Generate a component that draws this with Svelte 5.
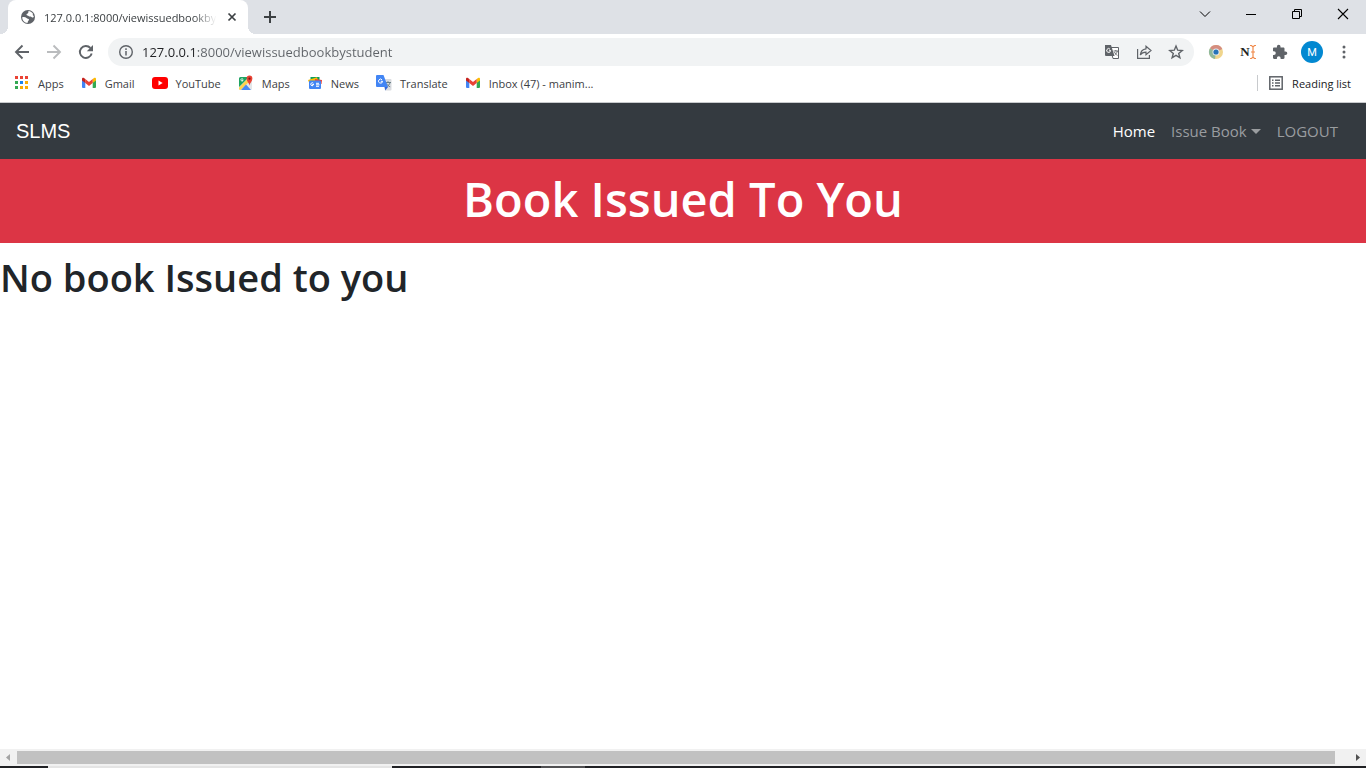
<script>
  let address = $state('127.0.0.1:8000/viewissuedbookbystudent');

  const bookmarks = [
    { icon: 'apps', label: 'Apps' },
    { icon: 'gmail', label: 'Gmail' },
    { icon: 'youtube', label: 'YouTube' },
    { icon: 'maps', label: 'Maps' },
    { icon: 'news', label: 'News' },
    { icon: 'translate', label: 'Translate' },
    { icon: 'gmail', label: 'Inbox (47) - manim...' }
  ];

  const appColors = [
    '#ea4335', '#ea4335', '#ea4335',
    '#34a853', '#1a83f2', '#fbac05',
    '#34a853', '#fbac05', '#fbac05'
  ];
</script>

{#snippet bookmarkIcon(name)}
  <svg width="16" height="16" viewBox="0 0 16 16" aria-hidden="true">
    {#if name === 'apps'}
      {#each appColors as color, i}
        <rect x={1 + (i % 3) * 5} y={1 + Math.floor(i / 3) * 5} width="3" height="3" fill={color} />
      {/each}
    {:else if name === 'gmail'}
      <path d="M1 4.500V12a1 1 0 0 0 1 1h2.300V7z" fill="#4285f4" />
      <path d="M15 4.500V12a1 1 0 0 1-1 1h-2.300V7z" fill="#34a853" />
      <path d="M11.700 4 13 3c1-.7 2 0 2 1v1.500l-3.300 2.600z" fill="#fbbc04" />
      <path d="M4.300 4 8 6.900 11.700 4v4.100L8 11 4.300 8.100z" fill="#ea4335" />
      <path d="M1 5.500V4c0-1 1-1.700 2-1l1.300 1v4.100z" fill="#c5221f" />
    {:else if name === 'youtube'}
      <rect x="0" y="2" width="16" height="12" rx="3" fill="#f00" />
      <path d="m6.500 5.500 4.200 2.500-4.200 2.500z" fill="#fff" />
    {:else if name === 'maps'}
      <rect x="1" y="2" width="13" height="13" rx="1.500" fill="#e3e6e8" />
      <path d="M2.500 2H11L1 12V3.500A1.500 1.500 0 0 1 2.500 2z" fill="#1fa463" />
      <path d="m1 12.500 10-10L13 5 2.500 15A1.500 1.500 0 0 1 1 13.500z" fill="#ffd34d" />
      <path d="M3 15 8 9.500l5 5.500z" fill="#4a89f3" />
      <path d="M5.600 5H4.200v.8h.6A1.200 1.200 0 1 1 4.900 4" stroke="#fff" stroke-width=".8" fill="none" />
      <path d="M11.500 10.500C11.300 8 8.600 6.500 8.600 3.500a2.900 2.900 0 0 1 5.800 0c0 3-2.700 4.500-2.900 7z" fill="#ea4335" />
      <circle cx="11.500" cy="3.700" r="1.100" fill="#811411" />
    {:else if name === 'news'}
      <path d="M3.500 2h9v6h-9z" fill="#0c9d58" />
      <path d="m1 5 9-2.700 1 3.200-9 2z" fill="#fbbc04" />
      <path d="m8 4 7 1-.5 4H8z" fill="#ea4335" />
      <rect x="2" y="5.500" width="12" height="8.500" rx="1" fill="#4285f4" />
      <path d="M7 9.500H5.500v1h.6A1.500 1.500 0 1 1 6.400 8.300M9 8.300h3M9 9.800h3.500M9 11.300h3" stroke="#fff" fill="none" />
    {:else}
      <path d="M7 4h7.500a1 1 0 0 1 1 1v9.500a1 1 0 0 1-1 1H9z" fill="#dadce0" />
      <path d="M9.500 7.500H15M12 6.200v1.300M14 7.500c-.3 2-2 3.500-3.500 4.300M10.700 8.500c.5 1.500 2 2.800 3.500 3.300" stroke="#60777f" stroke-width=".9" fill="none" />
      <path d="M1 0h6.500L12 12H1a1 1 0 0 1-1-1V1a1 1 0 0 1 1-1z" fill="#4285f4" />
      <path d="m8.500 12 3.500 0-2.700 3.500z" fill="#3367d6" />
      <path d="M6.700 6.300H4.800M6.500 6.300A2 2 0 1 1 6 4.800" stroke="#fff" fill="none" />
    {/if}
  </svg>
{/snippet}

<div class="browser">
  <header class="chrome">
    <div class="tab-strip">
      <div class="tab">
        <svg width="16" height="16" viewBox="0 0 16 16" aria-hidden="true">
          <circle cx="8" cy="8" r="7" fill="#5f6368" />
          <path d="M2.200 8.300c1.500-.6 3.400-.3 4.300.6.800.9 2.200.5 2.500 1.600.2 1-.8 1.200-1.200 2.200l-.3 1.400C4.600 13.800 2.300 11.500 2.200 8.300zM8.500 2.100c2 .2 3.500 1.200 4.600 2.900-.8.700-.4 1.500.7 2.100-.2 1.800-1.100 1.700-2 1.100-1-.8-2-.3-2.900-1C8 6.300 6.700 6.800 6.500 5.600c-.1-1 1.200-.8 1.700-1.600z" fill="#fff" />
        </svg>
        <span class="tab-title">127.0.0.1:8000/viewissuedbookbystudent</span>
        <button class="icon-button close" aria-label="Close tab">
          <svg width="16" height="16" viewBox="0 0 16 16"><path d="m4.500 4.500 7 7m0-7-7 7" stroke="#3c4043" stroke-width="1.700" /></svg>
        </button>
      </div>
      <button class="icon-button new-tab" aria-label="New tab">
        <svg width="16" height="16" viewBox="0 0 16 16"><path d="M8 2v12M2 8h12" stroke="#3c4043" stroke-width="2" /></svg>
      </button>
      <div class="window-controls">
        <button class="icon-button" aria-label="Search tabs">
          <svg width="14" height="14" viewBox="0 0 14 14"><path d="m2 4.500 5 5 5-5" fill="none" stroke="#000" /></svg>
        </button>
        <button class="icon-button" aria-label="Minimize">
          <svg width="14" height="14" viewBox="0 0 14 14"><path d="M2 7.500h10" stroke="#000" /></svg>
        </button>
        <button class="icon-button" aria-label="Restore">
          <svg width="14" height="14" viewBox="0 0 14 14"><path d="M2.500 4.500h7v7h-7zM4.500 4.500v-2h7v7h-2" fill="none" stroke="#000" /></svg>
        </button>
        <button class="icon-button" aria-label="Close window">
          <svg width="14" height="14" viewBox="0 0 14 14"><path d="m2 2 10 10m0-10L2 12" stroke="#000" stroke-width="1.100" /></svg>
        </button>
      </div>
    </div>

    <div class="toolbar">
      <button class="icon-button" aria-label="Back">
        <svg width="16" height="16" viewBox="0 0 16 16"><path d="M15 8H2m6.500-6.500L2 8l6.500 6.500" fill="none" stroke="#5f6368" stroke-width="1.900" /></svg>
      </button>
      <button class="icon-button" aria-label="Forward" disabled>
        <svg width="16" height="16" viewBox="0 0 16 16"><path d="M1 8h13M7.500 1.500 14 8l-6.500 6.500" fill="none" stroke="#babcbe" stroke-width="1.900" /></svg>
      </button>
      <button class="icon-button" aria-label="Reload">
        <svg width="16" height="16" viewBox="0 0 16 16"><path d="M13.700 9.500A6 6 0 1 1 12.400 4" fill="none" stroke="#5f6368" stroke-width="1.900" /><path d="M15 1v6.200H8.800z" fill="#5f6368" /></svg>
      </button>
      <div class="omnibox">
        <button class="icon-button" aria-label="Site information">
          <svg width="16" height="16" viewBox="0 0 16 16"><circle cx="8" cy="8" r="6.300" fill="none" stroke="#5f6368" stroke-width="1.400" /><path d="M8 7v4.500M8 4.300V6" stroke="#5f6368" stroke-width="1.500" /></svg>
        </button>
        <input class="address" aria-label="Address and search bar" spellcheck="false" bind:value={address} />
        <button class="icon-button" aria-label="Translate this page">
          <svg width="16" height="16" viewBox="0 0 16 16">
            <path d="M6 3.500h8.500v11H9z" fill="#fff" stroke="#5f6368" />
            <path d="M1 1h6l3.500 11H2a1 1 0 0 1-1-1z" fill="#5f6368" />
            <path d="M6.800 6.600H5.200M6.500 6.600A1.900 1.900 0 1 1 6 5.200" stroke="#fff" fill="none" />
            <path d="M9.500 7H14M11.800 6v1M13.300 7c-.3 1.800-1.300 3-2.500 4M10.500 8c.5 1.500 1.700 2.700 3 3.300" stroke="#5f6368" stroke-width=".9" fill="none" />
          </svg>
        </button>
        <button class="icon-button" aria-label="Share this page">
          <svg width="16" height="16" viewBox="0 0 16 16"><path d="M1.600 5v9.400h11.800V11M10 2.200 15 6.500l-5 4.300V8.200c-2.800 0-4.500.9-5.700 2.800.3-3.500 2.200-5.700 5.700-6.200z" fill="none" stroke="#5f6368" stroke-width="1.200" /></svg>
        </button>
        <button class="icon-button" aria-label="Bookmark this tab">
          <svg width="16" height="16" viewBox="0 0 16 16"><path d="m8 2 1.700 4.200 4.500.3-3.500 2.900 1.200 4.400L8 11.400l-3.900 2.400 1.200-4.400-3.500-2.900 4.500-.3z" fill="none" stroke="#5f6368" stroke-width="1.400" /></svg>
        </button>
      </div>
      <div class="extensions">
        <button class="icon-button" aria-label="Color wheel extension">
          <svg width="16" height="16" viewBox="0 0 16 16">
            <circle cx="8" cy="8" r="7" fill="#f0d58c" />
            <path d="M8 8 2 4.300A7 7 0 0 1 14.300 5z" fill="#d58d80" />
            <path d="M8 8 2 4.300A7 7 0 0 0 7 15z" fill="#8fb89b" />
            <circle cx="8" cy="8" r="3.500" fill="#e8edf0" />
            <circle cx="8" cy="8" r="2.600" fill="#2673b8" />
          </svg>
        </button>
        <button class="icon-button note" aria-label="Note extension">
          <span>N</span><svg width="6" height="16" viewBox="0 0 6 16"><path d="M0 1.500h1.500L3 3l1.500-1.500H6M0 14.500h1.500L3 13l1.500 1.500H6M3 3v10M1 8h4" fill="none" stroke="#f08a4b" stroke-width="1.200" /></svg>
        </button>
        <button class="icon-button" aria-label="Extensions">
          <svg width="16" height="16" viewBox="0 0 16 16"><path d="M13.500 7.500h-1V4.600c0-.7-.5-1.200-1.200-1.200H8.500v-.8a1.800 1.800 0 0 0-3.600 0v.8H2.200C1.500 3.400 1 3.900 1 4.600v2.600h.9a1.900 1.900 0 0 1 0 3.800H1v2.800c0 .7.500 1.200 1.200 1.200h2.700v-1a1.800 1.800 0 0 1 3.700 0v1h2.700c.7 0 1.200-.5 1.200-1.200v-2.700h1a1.800 1.800 0 0 0 0-3.600z" fill="#5f6368" /></svg>
        </button>
        <button class="icon-button avatar" aria-label="Profile M">M</button>
        <button class="icon-button" aria-label="Browser menu">
          <svg width="16" height="16" viewBox="0 0 16 16" fill="#5f6368"><circle cx="8" cy="3" r="1.500" /><circle cx="8" cy="8" r="1.500" /><circle cx="8" cy="13" r="1.500" /></svg>
        </button>
      </div>
    </div>

    <nav class="bookmarks" aria-label="Bookmarks">
      {#each bookmarks as bookmark}
        <a href="#bookmark">{@render bookmarkIcon(bookmark.icon)}<span>{bookmark.label}</span></a>
      {/each}
      <button class="reading-list">
        <svg width="16" height="16" viewBox="0 0 16 16" aria-hidden="true"><rect x="1.800" y="1.800" width="12.400" height="12.400" fill="none" stroke="#5f6368" stroke-width="1.500" /><path d="M4 5.200h1.500M7 5.200h5M4 8h1.500M7 8h5M4 10.800h1.500M7 10.800h5" stroke="#5f6368" stroke-width="1.400" /></svg>
        <span>Reading list</span>
      </button>
    </nav>
  </header>

  <div class="page">
    <nav class="navbar" aria-label="Main">
      <a class="brand" href="#home">SLMS</a>
      <ul>
        <li><a class="active" href="#home">Home</a></li>
        <li><a class="dropdown" href="#issue">Issue Book</a></li>
        <li><a href="#logout">LOGOUT</a></li>
      </ul>
    </nav>
    <h1 class="banner">Book Issued To You</h1>
    <h1 class="message">No book Issued to you</h1>
  </div>

  <div class="scrollbar">
    <button class="icon-button" aria-label="Scroll left">
      <svg width="17" height="17" viewBox="0 0 17 17"><path d="M10 5v7L6 8.500z" fill="#a3a3a3" /></svg>
    </button>
    <div class="track"><div class="thumb"></div></div>
    <button class="icon-button" aria-label="Scroll right">
      <svg width="17" height="17" viewBox="0 0 17 17"><path d="M7 5v7l4-3.500z" fill="#505050" /></svg>
    </button>
  </div>
  <div class="taskbar"><span class="search"></span><span class="task"></span></div>
</div>

<style>
  :global(body) {
    margin: 0;
    background: #fff;
  }

  .browser {
    display: flex;
    flex-direction: column;
    min-height: 100vh;
    font-family: "Segoe UI", "Open Sans", "Noto Sans", sans-serif;
    color: #212529;
  }

  button {
    border: 0;
    padding: 0;
    background: none;
    font: inherit;
    color: inherit;
  }

  a {
    color: inherit;
    text-decoration: none;
  }

  svg {
    display: block;
    flex: none;
  }

  .icon-button {
    display: flex;
    align-items: center;
    justify-content: center;
    flex: none;
  }

  .chrome {
    border-bottom: 1px solid #c8cacd;
    font-size: 11px;
    color: #3c4043;
  }

  .tab-strip {
    display: flex;
    height: 34px;
    padding-left: 8px;
    background: #dee1e6;
  }

  .tab {
    position: relative;
    display: flex;
    align-items: center;
    gap: 8px;
    box-sizing: border-box;
    width: 240px;
    padding: 0 8px 0 12px;
    border-radius: 8px 8px 0 0;
    background: #fff;
  }

  .tab::before,
  .tab::after {
    content: "";
    position: absolute;
    bottom: 0;
    width: 8px;
    height: 8px;
  }

  .tab::before {
    right: 100%;
    background: radial-gradient(circle at 0 0, #dee1e6 8px, #fff 8px);
  }

  .tab::after {
    left: 100%;
    background: radial-gradient(circle at 100% 0, #dee1e6 8px, #fff 8px);
  }

  .tab-title {
    flex: 1;
    margin-right: -4px;
    overflow: hidden;
    white-space: nowrap;
    mask-image: linear-gradient(to right, #000 85%, transparent 98%);
  }

  .close {
    width: 16px;
  }

  .new-tab {
    width: 44px;
  }

  .window-controls {
    display: flex;
    margin-left: auto;
    height: 28px;
  }

  .window-controls button {
    width: 46px;
  }

  .toolbar {
    display: flex;
    align-items: center;
    gap: 16px;
    height: 36px;
    padding: 0 14px;
  }

  .omnibox {
    display: flex;
    flex: 1;
    align-items: center;
    gap: 16px;
    height: 28px;
    padding: 0 10px;
    margin-left: -2px;
    border-radius: 14px;
    background: #f1f3f4;
  }

  .address {
    flex: 1;
    min-width: 0;
    padding: 0;
    margin-left: -8px;
    border: 0;
    outline: 0;
    font: inherit;
    font-size: 13px;
    color: transparent;
    caret-color: #202124;
    background: linear-gradient(to right, #202124 54px, #5f6368 54px);
    background-clip: text;
  }

  .extensions {
    display: flex;
    align-items: center;
    gap: 16px;
    margin-left: -2px;
  }

  .note {
    width: 16px;
    font: bold 13px "Liberation Serif", serif;
    color: #222;
  }

  .avatar {
    width: 22px;
    height: 22px;
    margin: 0 -3px;
    border-radius: 50%;
    background: #0288d1;
    color: #fff;
    font: 11px Roboto, sans-serif;
  }

  .bookmarks {
    display: flex;
    align-items: center;
    height: 26px;
    padding: 0 6px 6px;
  }

  .bookmarks a,
  .reading-list {
    display: flex;
    align-items: center;
    gap: 8px;
    padding: 0 9px 0 8px;
    white-space: nowrap;
  }

  .reading-list {
    margin-left: auto;
    padding-left: 10px;
    border-left: 1px solid #c8cacd;
    color: #202124;
  }

  .page {
    flex: 1;
  }

  .navbar {
    display: flex;
    align-items: center;
    justify-content: space-between;
    height: 56px;
    padding: 0 20px 0 16px;
    background: #343a40;
    color: #9a9da0;
  }

  .brand {
    font: 20px "Liberation Sans", Arial, sans-serif;
    color: #fff;
  }

  .navbar ul {
    display: flex;
    margin: 0;
    padding: 0;
    list-style: none;
  }

  .navbar li a {
    display: flex;
    align-items: center;
    gap: 4px;
    padding: 8px;
    font-size: 15px;
    line-height: 24px;
  }

  .navbar .active {
    color: #fff;
  }

  .dropdown::after {
    content: "";
    border: 5px solid transparent;
    border-top-color: currentColor;
    border-bottom: 0;
  }

  h1 {
    margin: 0;
    font-weight: 600;
  }

  .banner {
    padding: 10px 0 14px;
    background: #dc3545;
    color: #fff;
    font-size: 47px;
    line-height: 60px;
    text-align: center;
  }

  .message {
    padding: 10px 0;
    font-size: 38px;
    line-height: 48px;
  }

  .scrollbar {
    display: flex;
    height: 17px;
    background: #f1f1f1;
  }

  .scrollbar button {
    width: 17px;
  }

  .track {
    flex: 1;
    padding: 2px 14px 2px 0;
  }

  .thumb {
    height: 13px;
    background: #c1c1c1;
  }

  .taskbar {
    display: flex;
    height: 2px;
    padding-left: 48px;
    background: #202124;
  }

  .search {
    flex: 0 1 344px;
    background: #e4e4e4;
  }

  .task {
    width: 44px;
    margin-left: 149px;
    background: #505052;
  }
</style>
